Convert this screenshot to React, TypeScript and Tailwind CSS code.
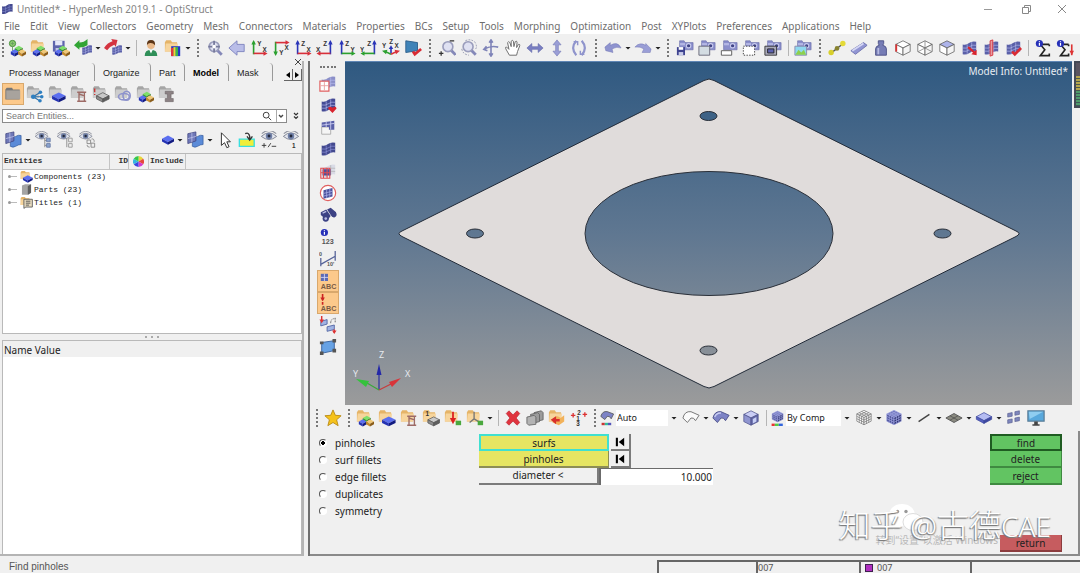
import React, { useState } from "react";

type Shades = [string, string, string];
const BLUE: Shades = ["#5b6ff0", "#2432b4", "#111a80"];
const GREEN: Shades = ["#7fe06a", "#2fa52c", "#1b6b1c"];
const GOLD: Shades = ["#f0c878", "#c58a2c", "#8a5c18"];
const GREY: Shades = ["#c9c9c9", "#8d8d8d", "#5f5f5f"];
const LAV: Shades = ["#c9cdf5", "#8f95d0", "#6368a8"];
const NAVY: Shades = ["#7378bd", "#474b93", "#2d3070"];
const WIRE: Shades = ["#ffffff", "#ffffff", "#f4f4f4"];

/* Isometric block: centre of the top face, half width, half height, depth */
function Block({ x, y, a, b, d, c, s = "none" }: { x: number; y: number; a: number; b: number; d: number; c: Shades; s?: string }) {
  return (
    <g stroke={s} strokeWidth=".8" strokeLinejoin="round">
      <path d={`M${x - a} ${y}L${x} ${y - b}L${x + a} ${y}L${x} ${y + b}Z`} fill={c[0]} />
      <path d={`M${x - a} ${y}L${x} ${y + b}V${y + b + d}L${x - a} ${y + d}Z`} fill={c[1]} />
      <path d={`M${x + a} ${y}L${x} ${y + b}V${y + b + d}L${x + a} ${y + d}Z`} fill={c[2]} />
    </g>
  );
}
const Trio = () => (
  <g>
    <Block x={12} y={10} a={4.4} b={2.5} d={3} c={GREEN} />
    <Block x={7.5} y={14} a={4.4} b={2.5} d={3} c={BLUE} />
    <Block x={15.6} y={14} a={4.4} b={2.5} d={3} c={GOLD} />
  </g>
);
const Folder = ({ grey = false }: { grey?: boolean }) => (
  <g>
    <path d="M1 3.5L2.5 1.5H7.5L9 3.5H14.5V14H1Z" fill={grey ? "#a5a5a5" : "#e5b468"} />
    <path d="M1 14L2 5H15.5L14.5 14Z" fill={grey ? "#cdcdcd" : "#f7d59c"} />
  </g>
);
const Sheet = ({ f = "#5a60a8", g = "#b9bdf0" }: { f?: string; g?: string }) => (
  <g>
    <path d="M3 6Q7 7 10 4.500T18 3V14Q14 13 10.500 15.500T3 17Z" fill={f} />
    <path d="M8 6V16.500M13 3.500V14.500M3 10Q7 11 10.500 8.500T18 7M3 13.500Q7 14.500 10.500 12T18 10.500" stroke={g} strokeWidth=".7" fill="none" />
  </g>
);
const Plane = () => (
  <g>
    <path d="M7 6Q10 8 13 6T19 5V15Q16 15 13 17T7 17Z" fill="#5b8bd8" stroke="#2d5596" strokeWidth=".7" />
    <path d="M2 3L11 1V11L2 14Z" fill="#6f78b8" stroke="#3a3f7c" strokeWidth=".8" />
    <path d="M6.500 2V12.500M2 8.500L11 6" stroke="#c5c9ee" strokeWidth=".8" />
  </g>
);
const Eye = ({ y = 6 }: { y?: number }) => (
  <g transform={`translate(0 ${y - 6})`}>
    <path d="M1.500 7Q10 -1 18.500 7Q10 14 1.500 7Z" fill="#e3e6ee" stroke="#7d8191" strokeWidth="1" />
    <circle cx="10" cy="6.500" r="3.600" fill="#6f7fa6" />
    <circle cx="10" cy="6.500" r="1.600" fill="#242a3c" />
    <path d="M2 4Q10 -3 18 4" stroke="#8d909c" strokeWidth="1.200" fill="none" />
  </g>
);
const Cam = () => (
  <g>
    <path d="M4 4V2H9L10 4H19V12H4Z" fill="#8b8fcc" stroke="#5e62a2" strokeWidth=".6" />
    <path d="M4.500 4.500H10V7H4.500Z" fill="#b4b7e4" />
    <circle cx="14" cy="7.500" r="3" fill="#c9cbee" />
    <circle cx="14" cy="7.500" r="1.800" fill="#3f4385" />
  </g>
);
const Lens = () => (
  <g>
    <path d="M12 12L17.500 17.500" stroke="#8488b8" strokeWidth="3.200" />
    <circle cx="9" cy="8.500" r="5.500" fill="#dfe1f2" stroke="#9a9dbc" strokeWidth="1.800" />
  </g>
);
const Letter = ({ x, y, c = "#333", s = 7, children }: { x: number; y: number; c?: string; s?: number; children: string }) => (
  <text x={x} y={y} fontSize={s} fontWeight="700" fill={c} fontFamily="Liberation Sans, sans-serif">{children}</text>
);
const Info = ({ x = 6, y = 5 }: { x?: number; y?: number }) => (
  <g>
    <circle cx={x} cy={y} r="4" fill="#2630b8" />
    <path d={`M${x} ${y - 0.5}V${y + 2.5}M${x} ${y - 2.5}V${y - 1.5}`} stroke="#fff" strokeWidth="1.300" />
  </g>
);
/* Cube whose faces are divided three by three */
function Rubik({ c, s }: { c: Shades; s: string }) {
  return (
    <g>
      <Block x={10} y={5.5} a={8} b={4} d={8} c={c} s={s} />
      <path
        d="M4.700 4.200L12.700 8.200V16.200M7.300 2.800L15.300 6.800V14.800M15.300 4.200L7.300 8.200V16.200M12.700 2.800L4.700 6.800V14.800M2 8.200L10 12.200L18 8.200M2 10.800L10 14.800L18 10.800"
        stroke={s} strokeWidth=".8" fill="none"
      />
    </g>
  );
}
/* Two coloured coordinate arrows meeting in one corner */
function Axes({ up, side, flip = false, down = false, u, v }: { up: string; side: string; flip?: boolean; down?: boolean; u: string; v: string }) {
  return (
    <g>
      <g transform={`${flip ? "translate(20 0) scale(-1 1)" : ""} ${down ? "translate(0 20) scale(1 -1)" : ""}`} fill="none" strokeWidth="1.800">
        <path d="M4 17V3" stroke={up} />
        <path d="M1.500 6L4 1L6.500 6Z" fill={up} />
        <path d="M4 16H16" stroke={side} />
        <path d="M15 13.500L19.500 16L15 18.500Z" fill={side} />
      </g>
      <Letter x={8} y={down ? 18 : 8}>{u}</Letter>
      <Letter x={flip ? 0 : 14} y={down ? 12 : 14}>{v}</Letter>
    </g>
  );
}
const BigArrow = ({ c, left = false }: { c: string; left?: boolean }) => (
  <path d={left ? "M0 7L6 1V4Q11 4 15 0V7Q11 9.500 6 9.500V12Z" : "M15 1L8 0L9.500 2.500Q4 4 0 10L3.500 12.500Q7 8 11.500 6.500L13 9Z"} fill={c} />
);
const R = "#d8303a", G = "#2ba02f", B = "#2a35b8";

const ICONS: Record<string, React.ReactNode> = {
  newModel: <g><circle cx="5" cy="5" r="3.500" fill="#8ccb6d" stroke="#3e8a34" /><path d="M5 8V16H9M3 5H7M5 3V7" stroke="#6a9e63" fill="none" /><Trio /></g>,
  openModel: <g><Folder /><Trio /></g>,
  saveModel: <g><path d="M1 2H14V14H1Z" fill="#5e64ad" /><path d="M3.500 2H11.500V7H3.500Z" fill="#e6e8f8" /><path d="M4 10H11V14H4Z" fill="#c2c5e8" /><Trio /></g>,
  importFile: <g><g transform="translate(7 5) scale(.72)"><Sheet /></g><BigArrow c="#32a534" left /></g>,
  exportFile: <g><g transform="translate(7 5) scale(.72)"><Sheet /></g><BigArrow c="#d43440" /></g>,
  user: <g><path d="M3 19Q3 12 10 12T17 19Z" fill="#2f8f58" /><path d="M8 12L10 16L12 12Z" fill="#fff" /><circle cx="10" cy="7" r="4.200" fill="#e9b98a" /><path d="M5.500 7Q5 1 10 1T14.500 7Q12 4 9 4.500Q6 5 5.500 7Z" fill="#5b3516" /></g>,
  reportFolder: <g><Folder /><path d="M8 8H18V19H8Z" fill="#2438c4" /><path d="M8 10H10.500V19H8Z" fill="#e33" /><path d="M10.500 9H13V19H10.500Z" fill="#ecd92e" /><path d="M13 9H15.500V19H13Z" fill="#3bb84a" /></g>,
  magnify: <g><Lens /><path d="M9 2V15M2.500 8.500H15.500" stroke="#777a9c" strokeWidth="2" /><circle cx="9" cy="8.500" r="2" fill="#fff" /></g>,
  back: <path d="M1 10L10 2V6H18V14H10V18Z" fill="#b9bde8" stroke="#7c81bd" />,
  ax1: <Axes up={G} side={R} u="Y" v="X" />,
  ax2: <Axes up={G} side={R} u="Y" v="X" down />,
  ax3: <Axes up={B} side={R} u="Z" v="X" />,
  ax4: <Axes up={B} side={R} u="Z" v="X" flip />,
  ax5: <Axes up={B} side={G} u="Z" v="Y" />,
  ax6: <Axes up={B} side={G} u="Z" v="Y" flip />,
  ax7: <g strokeWidth="1.800"><path d="M10 16V9" stroke={B} /><path d="M7.500 11L10 7L12.500 11Z" fill={B} /><path d="M10 17L4 14" stroke={G} /><path d="M0 13L6 12L4.500 17Z" fill={G} /><path d="M10 17L16 14" stroke={R} /><path d="M14 12L20 13L15.500 17Z" fill={R} /><Letter x={8} y={6}>Z</Letter><Letter x={0} y={10}>Y</Letter><Letter x={14} y={10}>X</Letter></g>,
  viewCheck: <g><path d="M2 2L15 4V13L2 15Z" fill="#3f83b8" stroke="#2c5f8a" /><path d="M10 14L12 17L19 11" stroke="#d92b33" strokeWidth="3" fill="none" /></g>,
  zoomInOut: <g><g transform="translate(2 0)"><Lens /></g><path d="M1 16H6M3.500 13.500V18.500M13 2H18" stroke="#333" strokeWidth="1.400" /></g>,
  zoomArea: <g><Lens /><path d="M6 2Q12 -1 17 4Q20 10 16 12M2 11Q3 17 10 18" stroke="#8a8da8" strokeDasharray="2 1.500" fill="none" /></g>,
  rotate: <path d="M10 2V18M3 11Q10 7 18 9M8 4L10 1L12 4M8 16L10 19L12 16M5 8L2 11.500L6 13" stroke="#7f84b8" strokeWidth="1.800" fill="none" />,
  pan: <path d="M6 18L2 11Q1 8.500 3 9L5.500 11.500L4 4Q5 2 6.500 4L8 8.500V2.500Q9 .5 10.500 2.500L11 8.500L12.500 3Q14 1.500 14.500 3.500L14 9.500L16 6Q18 5.500 17.500 7.500L15 14L14 18Z" fill="#fff" stroke="#707070" strokeWidth="1.100" />,
  leftRight: <path d="M1 10L6.500 5V8.500H13.500V5L19 10L13.500 15V11.500H6.500V15Z" fill="#7a7fc2" stroke="#5b60a4" strokeWidth=".6" />,
  upDown: <path d="M10 1L14.500 6.500H11.500V13.500H14.500L10 19L5.500 13.500H8.500V6.500H5.500Z" fill="#9a9ed6" stroke="#6b70b0" strokeWidth=".6" />,
  spin: <g fill="none" stroke="#8f94cc" strokeWidth="2.400"><path d="M7 2Q0 10 7 18M13 2Q20 10 13 18" /><path d="M4 3H8.500V7M16 17H11.500V13" strokeWidth="1.600" /></g>,
  undo: <path d="M1 9L7 4V7Q15 2 19 10Q14 8 9 11L10 15L2 13Z" fill="#8f94cf" stroke="#6b70b0" strokeWidth=".5" />,
  redo: <path d="M19 11L13 5V7Q6 3 1 9Q7 8 11 11L9 15L18 15Z" fill="#9a9ed6" stroke="#6b70b0" strokeWidth=".5" />,
  camSave: <g><Cam /><path d="M1 9H10V18H1Z" fill="#3f4490" /><path d="M3 9H8V12H3Z" fill="#fff" /><path d="M3 14.500H8V18H3Z" fill="#c8cbe8" /></g>,
  camWindow: <g><Cam /><path d="M1 8H13V18H1Z" fill="#d3dce2" stroke="#667" /></g>,
  camBar: <g><Cam /><path d="M1.500 13H13V18H1.500Z" fill="#fff" stroke="#555" /></g>,
  camRegion: <g><Cam /><path d="M1.500 8H14V18H1.500Z" fill="#fff" stroke="#333" strokeDasharray="1.500 1.500" /></g>,
  camScreen: <g><Cam /><path d="M1 8H14V18H1Z" fill="#aab" stroke="#333" /><path d="M4 11H11V15.500H4Z" fill="#5d62b2" stroke="#222" /></g>,
  camPicture: <g><Cam /><path d="M1 8H14V18H1Z" fill="#8fd8f0" stroke="#88a" /><path d="M1.500 17.500L5 12L8 15L11 12L13.500 17.500Z" fill="#8ed04c" /></g>,
  rigid: <g><path d="M3 16L17 5" stroke="#555" strokeWidth="1.500" /><circle cx="3.500" cy="15" r="3" fill="#d8cf2c" /><circle cx="10" cy="10.500" r="2.600" fill="#88832f" /><circle cx="16.500" cy="5" r="3" fill="#e4da38" /></g>,
  bar: <g><path d="M1 13L15 4L19 7L6 17Z" fill="#9195d3" stroke="#6c70ae" /><path d="M2.500 13L15 5" stroke="#d5d7f4" strokeWidth="2" /></g>,
  mass: <g><path d="M7 2H13V5L12 7Q16 8 16 11V18H4V11Q4 8 8 7L7 5Z" fill="#767cb5" stroke="#4c5086" /><path d="M7 10V17" stroke="#b8bbe2" strokeWidth="2" /></g>,
  cubeRed: <g><Block x={10} y={6} a={8} b={4} d={8} c={WIRE} s="#555" /><path d="M2.500 6V14" stroke="#d33" strokeWidth="2" /></g>,
  cubeWire: <g><Block x={10} y={6} a={8} b={4} d={8} c={WIRE} s="#555" /><path d="M10 2V10M2.500 14L10 10L17.500 14" stroke="#777" strokeWidth=".8" fill="none" /></g>,
  cubeTop: <Block x={10} y={6} a={8} b={4} d={8} c={["#aeb4ea", "#ffffff", "#f4f4f4"]} s="#555" />,
  sheetArrow: <g><Sheet /><path d="M9 9L16 15" stroke="#d8242e" strokeWidth="2.500" /><path d="M18.500 18V12L12.500 17Z" fill="#d8242e" /></g>,
  sheetFlip: <g><Sheet /><path d="M9 2L12 1V18L9 19Z" fill="#e59aa0" stroke="#d8303a" /></g>,
  sheetCheck: <g><Sheet /><path d="M9 14L12 17L19 10" stroke="#d92b33" strokeWidth="3" fill="none" /></g>,
  sum: <g><path d="M17 6H7L12 12L7 18.500H17V16M17 8V6" stroke="#222" strokeWidth="1.800" fill="none" /><Info /></g>,
  sumRed: <g><path d="M14 6H5L10 12L5 18.500H14V16M14 8V6" stroke="#222" strokeWidth="1.800" fill="none" /><Info x={5} /><path d="M17.500 6V18" stroke="#d33" strokeWidth="1.800" /><path d="M15 13H20L17.500 18Z" fill="#d33" /></g>,
  gFolder: <g><path d="M1.500 5L3 3H9L10 5H17.500V16H1.500Z" fill="#777" /><path d="M2.500 6H18V15.500H2.500Z" fill="#a8a39d" /></g>,
  gNodes: <g><Folder grey /><path d="M8 13L16 8M8 13L17 13M8 13L16 18" stroke="#2d6fa8" strokeWidth="1.200" /><g fill="#2f7fc0"><circle cx="8" cy="13" r="2.500" /><circle cx="16" cy="8" r="2" /><circle cx="17.500" cy="13" r="2" /><circle cx="15.500" cy="17.500" r="2" /></g></g>,
  gComp: <g><Folder grey /><Block x={12} y={12} a={7.5} b={3.8} d={3.5} c={BLUE} /></g>,
  gProp: <g><Folder grey /><path d="M8 8H18M10 8V18M16 8V18M8 18H18M10 10L16 12" stroke="#9d6b66" strokeWidth="1.500" /></g>,
  gMat: <g><Folder grey /><Block x={12} y={12} a={7} b={3.5} d={3.5} c={GREY} s="#555" /><path d="M3 4V8M3 10V11" stroke="#c33" strokeWidth="1.500" /></g>,
  gRing: <g><Folder grey /><g fill="none" stroke="#8e93cc" strokeWidth="1.800"><ellipse cx="11" cy="13" rx="6" ry="3.500" /><ellipse cx="14" cy="12" rx="4" ry="5" /></g></g>,
  gTrio: <g><Folder grey /><Trio /></g>,
  gSpool: <g><Folder grey /><path d="M8 7H17V10H14.500V15H17V18.500H8V15H10.500V10H8Z" fill="#8c8284" stroke="#6a6264" strokeWidth=".6" /></g>,
  plane: <Plane />,
  eyeList: <g><g transform="scale(.85)"><Eye /></g><path d="M12 8V18M12 10.500H15M12 16H15" stroke="#888" fill="none" /><path d="M14 8H18V12H14ZM14 14H18V18H14Z" fill="#8ba4cf" stroke="#6c7fa8" /></g>,
  eyeBoxes: <g><g transform="scale(.85)"><Eye /></g><path d="M12 8V18" stroke="#888" /><path d="M14 8H18V12H14ZM14 14H18V18H14Z" fill="#eee" stroke="#999" /></g>,
  eyeSwap: <g><g transform="scale(.85)"><Eye /></g><path d="M10 10H14V14H10ZM14.500 13.500H18.500V18H14.500Z" fill="#eee" stroke="#888" /><path d="M15 9Q18 8 18 12M13 18Q10 18 10 15.500" stroke="#888" fill="none" /></g>,
  comp: <Block x={10} y={8.5} a={7.5} b={4} d={3.5} c={BLUE} />,
  cursor: <path d="M6 2V16L9.500 13L12 18.500L14.500 17.500L12 12H16Z" fill="#fff" stroke="#222" />,
  highlight: <g><path d="M1.500 9H18V17H1.500Z" fill="#f0ee3a" stroke="#38dfe0" strokeWidth="1.500" /><path d="M8 3Q12 1 13 6V9M10 6L13 10L16 6" stroke="#333" strokeWidth="1.500" fill="none" /></g>,
  eyePlus: <g><Eye y={5} /><path d="M2 16H7M4.500 13.500V18.500M9 18L12 13.500M13 17H18" stroke="#333" /></g>,
  eyeOne: <g><Eye y={5} /><Letter x={11} y={19}>1</Letter></g>,
  vMask: <g><Sheet f="#8b8fc8" /><path d="M1 8H11V19H1Z" fill="#fff" stroke="#e06060" strokeWidth="1.300" /><path d="M6 9V18M2 13H10" stroke="#e8a0a0" /></g>,
  vHeart: <g><Sheet f="#454b95" /><path d="M15 19L10 14Q11 10.500 15 13Q19 10.500 19.500 14Z" fill="#d8242e" /></g>,
  vHalf: <g><path d="M3 10H13V18H3Z" fill="#f5f5f5" stroke="#aaa" /><path d="M3 5L17 3V13H11V10H3Z" fill="#5a60a8" /><path d="M8 4V10M13 3V13M3 8L17 6" stroke="#c9ccf0" /></g>,
  vSheet: <Sheet f="#43498f" g="#9298dd" />,
  vBoxIn: <g><Sheet f="#d9dbe6" g="#aaa" /><path d="M4 8H13V15H4Z" fill="#4b519c" /><path d="M2 7H12V18H2ZM5 7V18M9 7V18M2 12H12" fill="none" stroke="#e04a50" strokeWidth="1.200" /></g>,
  vCircle: <g><circle cx="10" cy="10" r="8.500" fill="#fff" stroke="#e06060" strokeWidth="1.300" /><path d="M5 7L15 4.500V14L5 16.500Z" fill="#4b519c" /><path d="M8.500 6V16M12 5V15M5 10.500L15 8M5 13.500L15 11" stroke="#aeb2ea" strokeWidth=".8" /></g>,
  vFind: <g fill="#3c4284"><path d="M2 7L8 4L13 11L9 16L2 10ZM9 4L13 2L19 7L17 13L13 10Z" /><circle cx="7.500" cy="14" r="3.500" /><circle cx="16.500" cy="9.500" r="3" /><path d="M4 8L8 6" stroke="#b8bce4" strokeWidth="1.500" /><circle cx="7.500" cy="14" r="1.500" fill="#b8bce4" /></g>,
  vInfo: <g><Info x={6} y={5} /><Letter x={3} y={18} c="#555" s={8}>123</Letter></g>,
  vScale: <g><path d="M2 16L18 7M2 9V18M18 1V12" stroke="#556298" strokeWidth="1.400" /><Letter x={0} y={7} c="#555" s={6}>0</Letter><Letter x={9} y={18} c="#555" s={6}>10'</Letter></g>,
  vAbcMesh: <g><path d="M2 2H10V10H2Z" fill="#5b6ab4" /><path d="M6 2V10M2 6H10" stroke="#d0d5f5" /><Letter x={2} y={19} c="#7a5b45" s={8}>ABC</Letter></g>,
  vAbcLoad: <g><path d="M4 0V7M4 9V12" stroke="#cc2222" strokeWidth="1.800" /><path d="M1.500 4H6.500L4 8Z" fill="#cc2222" /><Letter x={2} y={19} c="#7a5b45" s={8}>ABC</Letter></g>,
  vSwap: <g><path d="M2 6L9 4V9L2 11ZM9 12L17 10V15L9 17Z" fill="#a0b4e4" stroke="#5265a4" /><path d="M3 0V5M17 15V19" stroke="#d33" strokeWidth="1.600" /><path d="M.5 4H5.500L3 8ZM14.500 16H19.500L17 20Z" fill="#d33" /><path d="M13 8Q13 3 17 3M18 2V7" stroke="#666" fill="none" strokeDasharray="2 1" /></g>,
  vQuad: <g><path d="M3 5L17 3V14L3 17Z" fill="#67a2e4" stroke="#35609c" /><g fill="#555"><path d="M1 4H5V7H1ZM15 1H19V5H15ZM15 12H19V16H15ZM1 15H5V19H1Z" /></g></g>,
  star: <path d="M10 1L12.600 7L19 7.500L14 12L15.700 18.500L10 15L4.300 18.500L6 12L1 7.500L7.400 7Z" fill="#f5c21c" stroke="#b98a14" />,
  bComp: <g><Folder /><Block x={12} y={12} a={7.5} b={3.8} d={3.5} c={BLUE} /></g>,
  bProp: <g><Folder /><path d="M8 8H18M10 8V18M16 8V18M8 18H18M10 10L16 12" stroke="#9d6b66" strokeWidth="1.500" /></g>,
  bMat: <g><Folder /><Block x={13} y={12} a={6.5} b={3.2} d={3.5} c={GREY} s="#555" /><Letter x={4} y={8}>1</Letter></g>,
  bLoad: <g><Folder /><path d="M10 3V12" stroke="#d22" strokeWidth="2" /><path d="M6.500 10H13.500L10 17Z" fill="#d22" /><path d="M13 13H19V18H13Z" fill="#4aa83e" /></g>,
  bSystem: <g><Folder /><path d="M9 3V11L4 15M9 11L14 14" stroke="#777" strokeWidth="1.500" fill="none" /><path d="M13 13H19V18H13Z" fill="#4aa83e" /></g>,
  remove: <path d="M2.500 5L5.500 2L10 6.500L14.500 2L17.500 5L13.500 10L17.500 15L14.500 18L10 13.500L5.500 18L2.500 15L6.500 10Z" fill="#e0343e" stroke="#b82530" strokeWidth=".7" />,
  stack: <g fill="#9b9b9b" stroke="#5e5e5e" strokeWidth=".9"><path d="M9 4L17 2L19 4V12L11 14Z" /><path d="M5 6L13 4L15 6V14L7 16Z" /><path d="M1 9L9 7L11 9V17L3 18L1 16Z" fill="#b3b3b3" /></g>,
  folderRed: <g><Folder /><path d="M6 10Q10 6 14 10L18 7V14L12 18L5 15Z" fill="#f2b25a" /><path d="M3 12L9 8V11H13V14H9V17Z" fill="#d8302c" /></g>,
  renumber: <g><Letter x={8} y={7} s={7}>2</Letter><Letter x={7} y={13} s={7}>1</Letter><Letter x={7} y={19} s={7}>3</Letter><path d="M1 7H6M3.500 4.500V9.500M14 6H19M16.500 3.500V8.500" stroke="#d33" strokeWidth="1.500" /></g>,
  wireSurf: <path d="M1 10Q3 2 10 3L19 7L15 13Q13 9 10 10L6 15Z" fill="#fafafa" stroke="#777" strokeWidth="1.100" />,
  shadeSurf: <g><path d="M1 10Q3 2 10 3L19 7L15 13Q13 9 10 10L6 15Z" fill="#7d83c6" stroke="#4b4f88" /><path d="M3 9Q5 4 10 4.500" stroke="#c9cdf2" strokeWidth="1.500" fill="none" /></g>,
  glassCube: <g><Block x={10} y={6} a={8} b={4} d={8} c={LAV} s="#4b4f88" /><path d="M12 11L16 9V14L12 16Z" fill="#c8cff5" /></g>,
  rubikWire: <Rubik c={WIRE} s="#777" />,
  rubik: <Rubik c={NAVY} s="#9ea3e0" />,
  line: <path d="M4 14L16 6" stroke="#444" strokeWidth="1.600" />,
  mesh: <g><path d="M1 10L10 5L19 10L10 15Z" fill="#8a8a80" stroke="#555" /><path d="M5.500 7.500L14.500 12.500M14.500 7.500L5.500 12.500" stroke="#444" strokeWidth=".7" /></g>,
  solid: <Block x={10} y={8.5} a={8.5} b={4.5} d={3} c={["#b5bcf2", "#5560c0", "#3e489f"]} s="#3e489f" />,
  tiles: <g fill="#7e86bc" stroke="#555b8e" strokeWidth=".7"><path d="M3 5L8 4V8L3 9ZM11 3L16 2V6L11 7ZM3 12L8 11V15L3 16ZM11 10L16 9V13L11 14Z" /></g>,
  monitor: <g><path d="M1 2H19V13.500H1Z" fill="#58a8dc" stroke="#5a7e98" strokeWidth="1.400" /><path d="M2 3H18L3 11Z" fill="#8fcdf0" /><path d="M8 14H12V17H14V18.500H6V17H8Z" fill="#444" /></g>,
  comboSurf: <g><path d="M1 8Q3 1 9 2L17 5L14 11Q12 7 9 8L6 12Z" fill="#7d83c6" stroke="#555" /><path d="M2 16H6V19H2Z" fill="#c33" /><path d="M6 16H10V19H6Z" fill="#3b9" /><path d="M10 16H14V19H10Z" fill="#55b" /></g>,
  comboCube: <g><g transform="translate(1 0) scale(.85)"><Rubik c={NAVY} s="#9ea3e0" /></g><path d="M2 17H6V20H2Z" fill="#e33" /><path d="M6 17H11V20H6Z" fill="#5c4" /><path d="M11 17H16V20H11Z" fill="#36d" /></g>,
  treeComp: <g><Folder /><Block x={12} y={12} a={7.5} b={4} d={3.5} c={BLUE} /></g>,
  treePart: <g><path d="M3 4L8 2H17V15L13 18H3Z" fill="#a4a4a4" /><path d="M12 5L17 2V15L12 18Z" fill="#5f5f5f" /></g>,
  treeTitle: <g><Folder /><path d="M6 5H19V17H9L6 19Z" fill="#e8dcc0" stroke="#555" strokeWidth="1.300" /><path d="M9 8H16M9 11H16M9 14H14" stroke="#444" strokeWidth="1.300" /></g>,
};

function Icon({ n, cls = "size-5" }: { n: string; cls?: string }) {
  return <svg viewBox="0 0 20 20" className={`${cls} shrink-0`} aria-hidden="true">{ICONS[n]}</svg>;
}
function Tool({ n, on = false }: { n: string; on?: boolean }) {
  return (
    <button aria-label={n} className={`flex h-[22px] w-[22px] shrink-0 items-center justify-center ${on ? "border border-[#d9a86c] bg-[#fcc98b]" : ""}`}>
      <Icon n={n} cls="size-[18px]" />
    </button>
  );
}
const Caret = () => (
  <svg viewBox="0 0 8 8" className="size-2 shrink-0" aria-hidden="true"><path d="M1.500 3H6.500L4 5.500Z" fill="#222" /></svg>
);
const Grip = ({ cls = "w-3" }: { cls?: string }) => (
  <span className={`flex shrink-0 justify-center ${cls}`}><span className="h-[18px] border-l-2 border-dotted border-[#777]" /></span>
);
const Sep = () => <span className="flex w-2 shrink-0 justify-center"><span className="h-4 border-l border-[#b5b5b5]" /></span>;

/* "|" separator, ":" grip, "v" drop-down arrow, anything else an icon */
function Strip({ items }: { items: string }) {
  return (
    <>
      {items.split(" ").map((k, i) =>
        k === "|" ? <Sep key={i} /> : k === ":" ? <Grip key={i} /> : k === "v" ? <Caret key={i} /> : <Tool key={i} n={k} />
      )}
    </>
  );
}

const MENUS = ["File", "Edit", "View", "Collectors", "Geometry", "Mesh", "Connectors", "Materials", "Properties", "BCs", "Setup", "Tools", "Morphing", "Optimization", "Post", "XYPlots", "Preferences", "Applications", "Help"];

function TitleBar() {
  return (
    <header className="flex h-[18px] shrink-0 items-center pr-3 text-[#858585]">
      <span className="mr-[3px]"><Icon n="vSheet" cls="size-[14px]" /></span>
      <h1 className="text-[10px] leading-4">Untitled* - HyperMesh 2019.1 - OptiStruct</h1>
      <span className="ml-auto flex items-center gap-6 text-[#888]">
        <button aria-label="Minimize" className="flex h-3 w-3 items-center"><span className="h-px w-2 bg-[#999]" /></button>
        <button aria-label="Restore"><svg viewBox="0 0 12 12" className="size-3" fill="none" stroke="currentColor"><path d="M2.500 4.500H8.500V10.500H2.500ZM4.500 4V2.500H10.500V8.500H9" /></svg></button>
        <button aria-label="Close"><svg viewBox="0 0 12 12" className="size-3" fill="none" stroke="currentColor"><path d="M2 2L10 10M10 2L2 10" /></svg></button>
      </span>
    </header>
  );
}

const TABS: [string, string][] = [["Process Manager", "w-[93px] pl-[7px]"], ["Organize", "w-[56px] pl-2"], ["Part", "w-[34px] pl-2"], ["Model", "w-[44px] pl-2 font-bold text-black"], ["Mask", "w-[44px] pl-2"]];
const ROWS: [string, string][] = [["treeComp", "Components (23)"], ["treePart", "Parts (23)"], ["treeTitle", "Titles (1)"]];

function Browser() {
  return (
    <aside className="flex w-[310px] shrink-0 flex-col border-r-2 border-[#6f6f6f] bg-[#f0f0f0] pr-1">
      <div className="flex min-h-0 grow flex-col border-b-2 border-r-2 border-[#b4b4b4] pl-[2px]">
        <div className="relative flex h-[20px] items-end text-[9px] leading-4 text-[#222]">
          {TABS.map(([t, c]) => (
            <button key={t} className={`h-[18px] rounded-tr-sm border-r border-[#999] pt-[2px] text-left font-['Liberation_Sans',sans-serif] whitespace-nowrap ${c}`}>{t}</button>
          ))}
          <span className="ml-auto flex">
            <button aria-label="Previous tab" className="flex h-3 w-[9px] items-center justify-center border-b border-r border-[#666]"><svg viewBox="0 0 6 6" className="size-[6px]"><path d="M5 0V6L1 3Z" /></svg></button>
            <button aria-label="Next tab" className="flex h-3 w-[9px] items-center justify-center border-b border-r border-[#666]"><svg viewBox="0 0 6 6" className="size-[6px]"><path d="M1 0V6L5 3Z" /></svg></button>
          </span>
          <button aria-label="Close panel" className="absolute -top-[3px] right-0"><svg viewBox="0 0 8 8" className="size-2" stroke="#444"><path d="M1 1L7 7M7 1L1 7" /></svg></button>
        </div>
        <div className="flex h-[25px] items-center">
          <Tool n="gFolder" on />
          <Strip items="gNodes gComp gProp gMat gRing gTrio gSpool" />
        </div>
        <div className="mt-[3px] flex items-center gap-[6px]">
          <div className="flex h-[14px] grow items-center border border-[#8b8b8b] bg-white pr-px">
            <input aria-label="Search entities" placeholder="Search Entities..." className="min-w-0 grow px-[3px] font-['Liberation_Sans',sans-serif] text-[9px] leading-3 outline-none placeholder:text-[#777]" />
            <svg viewBox="0 0 12 12" className="size-[10px]" fill="none" stroke="#444" strokeWidth="1.200"><circle cx="5" cy="5" r="3.500" /><path d="M7.500 7.500L11 11" /></svg>
            <span className="ml-1 flex h-full w-[9px] items-center justify-center border-l border-[#aaa]"><svg viewBox="0 0 6 6" className="size-[6px]" fill="none" stroke="#444" strokeWidth="1.400"><path d="M1 2L3 4L5 2" /></svg></span>
          </div>
          <button aria-label="More" className="mr-[3px]"><svg viewBox="0 0 6 8" className="h-2 w-[6px]" fill="none" stroke="#333" strokeWidth="1.200"><path d="M1 1L3 3L5 1M1 4.500L3 6.500L5 4.500" /></svg></button>
        </div>
        <div className="flex h-[30px] items-center pt-1">
          <Strip items="plane v eyeList eyeBoxes eyeSwap" />
          <span className="ml-auto" />
          <button aria-label="comp" className="flex w-4 justify-center"><Icon n="comp" cls="size-4" /></button><Caret />
          <Strip items="plane v cursor highlight eyePlus eyeOne" />
        </div>
        <section className="flex h-[181px] shrink-0 flex-col border border-[#b9b9b9] bg-white font-['Liberation_Mono',monospace] text-[8px] leading-3 text-[#222]">
          <div className="flex h-4 shrink-0 border-b border-[#c4c4c4] bg-[#f0f0f0] font-bold text-[#333]">
            <span className="w-[107px] border-r border-[#c4c4c4] pt-px pl-px">Entities</span>
            <span className="w-[19px] border-r border-[#c4c4c4] pt-px text-right">ID</span>
            <span className="flex w-[20px] items-center justify-center border-r border-[#c4c4c4]">
              <svg viewBox="0 0 12 12" className="size-[11px]" aria-hidden="true"><path d="M6 6V0A6 6 0 0 1 11.200 3Z" fill="#e8d53a" /><path d="M6 6L11.200 3A6 6 0 0 1 11.200 9Z" fill="#e5483a" /><path d="M6 6L11.200 9A6 6 0 0 1 6 12Z" fill="#d23bd0" /><path d="M6 6V12A6 6 0 0 1 .8 9Z" fill="#3a46e0" /><path d="M6 6L.8 9A6 6 0 0 1 .8 3Z" fill="#35b6e0" /><path d="M6 6L.8 3A6 6 0 0 1 6 0Z" fill="#36c84a" /></svg>
            </span>
            <span className="w-[37px] border-r border-[#c4c4c4] pt-px pl-px">Include</span>
          </div>
          <ul>
            {ROWS.map(([n, t]) => (
              <li key={t} className="flex h-[13px] items-center pl-[5px]">
                <span className="size-[3px] rounded-full bg-[#999]" /><span className="mr-[3px] h-px w-[6px] bg-[#bbb]" />
                <Icon n={n} cls="size-[13px]" /><span className="ml-px">{t}</span>
              </li>
            ))}
          </ul>
        </section>
        <div className="flex h-[6px] shrink-0 items-center justify-center gap-1">
          <i className="size-[2px] bg-[#aaa]" /><i className="size-[2px] bg-[#aaa]" /><i className="size-[2px] bg-[#aaa]" />
        </div>
        <section className="grow border border-b-0 border-[#b9b9b9] bg-white">
          <h2 className="h-4 bg-[#f0f0f0] pl-px text-[10px] leading-[18px] text-[#222]">Name Value</h2>
        </section>
      </div>
    </aside>
  );
}

function Viewport() {
  const pts = Array.from({ length: 48 }, (_, i) => {
    const t = (i / 48) * Math.PI * 2;
    return `${(364 + 124 * Math.cos(t)).toFixed(1)},${(171.5 + 62 * Math.sin(t)).toFixed(1)}`;
  }).join(" ");
  return (
    <div className="relative min-w-0 grow border-t border-[#5f86b5] bg-linear-to-b from-[#2f5981] via-[#5f7791] to-[#9b9b9b]">
      <svg viewBox="0 0 727 343" className="h-full w-full" role="img" aria-label="Plate model">
        <defs>
          <linearGradient id="backdrop" gradientUnits="userSpaceOnUse" x1="0" y1="0" x2="0" y2="343">
            <stop offset="0" stopColor="#2f5981" /><stop offset=".5" stopColor="#5f7791" /><stop offset="1" stopColor="#9b9b9b" />
          </linearGradient>
        </defs>
        <path d="M359 18.500Q364 15.500 369 18.500L671 169Q677 171.500 671 174.500L369 324.500Q364 327.500 359 324.500L57 174.500Q51 171.500 57 169Z" fill="#e0dcdb" stroke="#222b38" strokeWidth="1" />
        <g fill="url(#backdrop)" stroke="#2a2f38">
          <polygon points={pts} />
          <ellipse cx="363.500" cy="54" rx="8.500" ry="4.500" />
          <ellipse cx="130" cy="171.500" rx="8.500" ry="4.500" />
          <ellipse cx="597.500" cy="171.500" rx="8.500" ry="4.500" />
          <ellipse cx="363.500" cy="288.500" rx="8.500" ry="4.500" />
        </g>
        <g strokeWidth="1.200">
          <path d="M34 328V312" stroke="#2a2fa0" /><path d="M31.500 313L34 302L36.500 313Z" fill="#2428a8" />
          <path d="M34 328L22 321" stroke="#3aa83a" /><path d="M24 319L11 317L21 325Z" fill="#35c23c" />
          <path d="M34 328L46 322" stroke="#c83a3a" /><path d="M44 320L56 316L47 325Z" fill="#d8343a" />
        </g>
        <g fill="#e6e9ee" fontSize="9" fontFamily="Noto Sans, sans-serif">
          <text x="34" y="296">Z</text><text x="8" y="315">Y</text><text x="60" y="315">X</text>
        </g>
      </svg>
      <p className="absolute top-px right-[4px] text-[10px] leading-4 text-[#e8edf3]">Model Info: Untitled*</p>
    </div>
  );
}

function Combo({ icon, value, label, cls }: { icon: string; value: string; label: string; cls: string }) {
  return (
    <div className={`flex shrink-0 items-center ${cls}`}>
      <Icon n={icon} cls="size-4" />
      <select aria-label={label} className="h-4 min-w-0 grow appearance-none bg-white pl-px text-[9px] leading-4 text-[#222] outline-none"><option>{value}</option></select>
      <span className="flex w-3 justify-center"><Caret /></span>
    </div>
  );
}

const MODES = ["pinholes", "surf fillets", "edge fillets", "duplicates", "symmetry"];
const BEVEL = "border-r-2 border-b-2 border-[#7b7b7b]";

function CommandPanel() {
  const [mode, setMode] = useState("pinholes");
  const jump = <svg viewBox="0 0 12 12" className="size-[10px]" aria-hidden="true"><path d="M1 1H3.500V11H1ZM11 1V11L4.500 6Z" /></svg>;
  return (
    <section className="relative flex grow items-start border-b-2 border-r-2 border-[#8a8a8a] pt-[3px] pr-4 pl-[9px] text-[10px] leading-4 text-[#222]">
      <fieldset className="w-[160px]">
        {MODES.map((m) => (
          <label key={m} className="flex h-[17px] items-center gap-2">
            <input type="radio" name="mode" checked={mode === m} onChange={() => setMode(m)} className="size-[8px] appearance-none rounded-full border border-t-[#555] border-r-white border-b-white border-l-[#555] bg-white checked:bg-[radial-gradient(circle,#000_2px,#fff_2px)]" />
            {m}
          </label>
        ))}
      </fieldset>
      <div className="w-[234px]">
        <div className="flex h-[17px] gap-[2px]">
          <button className="w-[130px] border-2 border-[#40e0d0] bg-[#e6e562] leading-3">surfs</button>
          <button aria-label="Reset surfs" className={`flex w-5 items-center justify-center ${BEVEL}`}>{jump}</button>
        </div>
        <div className="flex h-[17px] gap-[2px]">
          <button className="w-[130px] border-r border-b-2 border-[#8d8d55] bg-[#e6e562] leading-[14px]">pinholes</button>
          <button aria-label="Reset pinholes" className={`flex w-5 items-center justify-center ${BEVEL}`}>{jump}</button>
        </div>
        <div className="flex h-[17px]">
          <label htmlFor="diameter" className={`w-[120px] text-center leading-[14px] ${BEVEL}`}>diameter &lt;</label>
          <input id="diameter" defaultValue="10.000" className="w-[114px] border-t border-l-2 border-[#6b6b6b] bg-white pr-px text-right outline-none" />
        </div>
      </div>
      <div className="ml-auto flex w-[72px] flex-col">
        <button className="h-[17px] border-2 border-[#1f5c22] bg-[#62c462] leading-3">find</button>
        <button className="h-[17px] border-r border-b-2 border-[#3f8a41] bg-[#62c462] leading-[14px]">delete</button>
        <button className="h-[17px] border-r border-b-2 border-[#3f8a41] bg-[#62c462] leading-[14px]">reject</button>
      </div>
      <button className="absolute right-4 bottom-[2px] h-[17px] w-[62px] border-r border-b-2 border-[#8c3c3e] bg-[#c65c5f] leading-[14px]">return</button>
      <p className="pointer-events-none absolute right-[80px] bottom-[6px] text-[10px] leading-4 whitespace-nowrap text-[#b9b9b9]">转到“设置”以激活 Windows</p>
      <svg viewBox="0 0 36 32" className="pointer-events-none absolute right-[154px] bottom-[20px] h-8 w-9" aria-hidden="true">
        <ellipse cx="14" cy="13" rx="13" ry="11" fill="#fff" /><path d="M6 21L5 28L13 23Z" fill="#fff" />
        <ellipse cx="25" cy="20" rx="10" ry="8.500" fill="#fff" stroke="#ddd" />
        <circle cx="9.500" cy="9.500" r="1.700" fill="#999" /><circle cx="18" cy="9.500" r="1.700" fill="#999" />
      </svg>
      <p className="pointer-events-none absolute right-[27px] bottom-[10px] text-[32px] leading-9 font-light whitespace-nowrap text-white [text-shadow:-1px_1px_1px_#777,1px_1px_1px_#999]">知乎<span className="text-[30px]"> @</span>古德<span className="text-[28px]">CAE</span></p>
    </section>
  );
}

export default function App() {
  return (
    <div className="flex h-screen flex-col overflow-hidden bg-white font-['Noto_Sans','Noto_Sans_CJK_SC',sans-serif]">
      <TitleBar />
      <nav className="flex h-4 shrink-0 items-center gap-[10px] pl-1 text-[10px] leading-4 whitespace-nowrap text-[#6e6e6e]">
        {MENUS.map((m) => <button key={m}>{m}</button>)}
      </nav>
      <div className="flex h-[27px] shrink-0 items-center bg-[#f0f0f0]">
        <Grip cls="w-[6px]" />
        <Strip items="newModel openModel saveModel importFile v exportFile v | user reportFolder v : magnify back ax1 ax2 ax3 ax4 ax5 ax6 ax7 viewCheck : zoomInOut zoomArea rotate pan leftRight upDown spin : undo v redo v : camSave camWindow camBar camRegion camScreen | camPicture : rigid bar mass cubeRed cubeWire cubeTop sheetArrow sheetFlip sheetCheck | sum sumRed" />
      </div>
      <main className="flex min-h-0 grow bg-[#f0f0f0]">
        <Browser />
        <div className="flex min-w-0 grow flex-col">
          <div className="flex h-[344px] shrink-0">
            <div className="flex w-[35px] shrink-0 flex-col items-center pt-[5px]">
              <span className="mb-1 w-4 border-t-2 border-dotted border-[#777]" />
              {["vMask", "vHeart", "vHalf", "vSheet", "vBoxIn", "vCircle", "vFind", "vInfo", "vScale"].map((n) => <Tool key={n} n={n} />)}
              <Tool n="vAbcMesh" on /><Tool n="vAbcLoad" on /><Tool n="vSwap" /><Tool n="vQuad" />
            </div>
            <Viewport />
            <div className="flex w-2 shrink-0 justify-end">
              <div className="flex h-[47px] w-[6px] flex-col border-2 border-r-0 border-[#454a56] bg-[#5b5560] pt-[13px]">
                <span className="grow bg-[repeating-linear-gradient(#b5a54c_0_2px,#4c5a50_2px_3px)]" />
                <span className="grow bg-[repeating-linear-gradient(#4f9a6c_0_2px,#3f5a58_2px_3px)]" />
              </div>
            </div>
          </div>
          <div className="flex h-[26px] shrink-0 items-center pl-[2px]">
            <Grip cls="w-[10px]" /><Tool n="star" /><Grip cls="w-[10px]" />
            <Strip items="openModel bComp bProp bMat bLoad bSystem v | remove stack folderRed renumber" />
            <Grip cls="w-[10px]" />
            <Combo icon="comboSurf" value="Auto" label="Geometry colour" cls="w-[80px]" />
            <Strip items="wireSurf v shadeSurf v glassCube |" />
            <Combo icon="comboCube" value="By Comp" label="Element colour" cls="w-[83px]" />
            <Strip items="rubikWire v rubik v line v mesh v solid v tiles monitor" />
          </div>
          <CommandPanel />
        </div>
      </main>
      <footer className="flex h-[17px] shrink-0 items-end bg-[#f0f0f0] text-[9px] leading-[11px] text-[#555]">
        <p className="grow pl-[9px] font-['Liberation_Sans',sans-serif] text-[10px] leading-3">Find pinholes</p>
        <span className="h-[13px] w-[99px] border-t-2 border-l-2 border-[#666]" />
        <span className="h-[13px] w-[103px] border-t-2 border-l-2 border-[#666]">007</span>
        <span className="flex h-[13px] w-[111px] items-center gap-1 border-t-2 border-l-2 border-[#666] pl-1"><i className="size-2 border border-[#402050] bg-[#b02fc0]" />007</span>
        <span className="h-[13px] w-[110px] border-t-2 border-l-2 border-[#666]" />
      </footer>
    </div>
  );
}
